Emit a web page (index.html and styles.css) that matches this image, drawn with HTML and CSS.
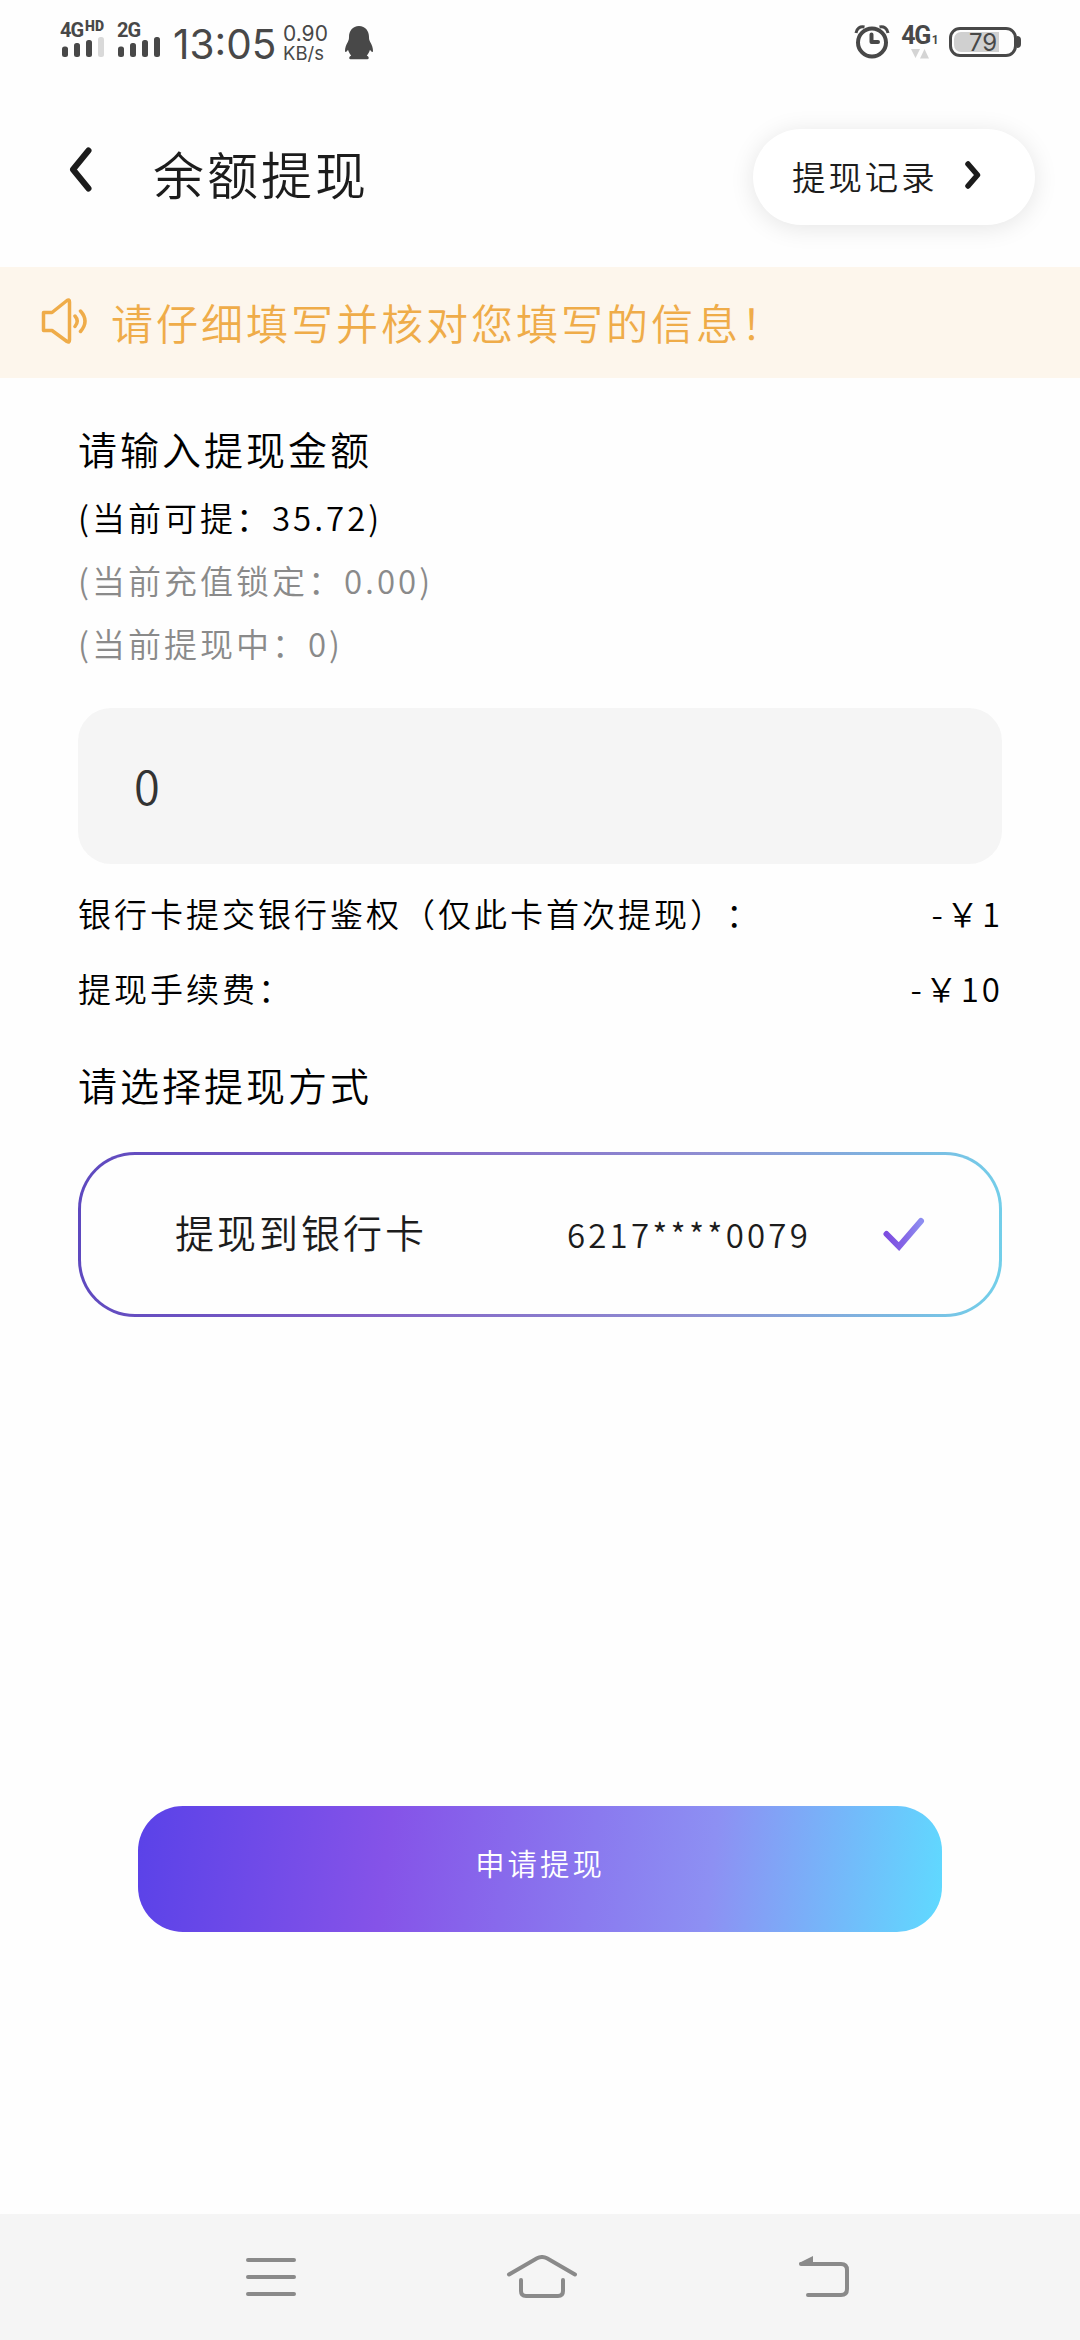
FILE: index.html
```html
<!DOCTYPE html>
<html lang="zh-CN">
<head>
<meta charset="utf-8">
<title>余额提现</title>
<link rel="stylesheet" href="styles.css">
</head>
<body>
<div class="screen">
  <div class="status">
    <div class="sim">
      <div class="net">4G<span class="hd">HD</span></div>
      <svg class="bars" width="43" height="20" viewBox="0 0 43 20" fill="#484848"><rect x="0" y="9.500" width="6" height="10.500" rx="2.500"/><rect x="12" y="6" width="6" height="14" rx="2.500"/><rect x="24" y="3" width="6" height="17" rx="2.500"/><rect x="36" y="0" width="6" height="20" rx="2.500" fill="#d9d9d9"/></svg>
    </div>
    <div class="sim sim2">
      <div class="net">2G</div>
      <svg class="bars" width="43" height="20" viewBox="0 0 43 20" fill="#484848"><rect x="0" y="9.500" width="6" height="10.500" rx="2.500"/><rect x="12" y="6" width="6" height="14" rx="2.500"/><rect x="24" y="3" width="6" height="17" rx="2.500"/><rect x="36" y="0" width="6" height="20" rx="2.500"/></svg>
    </div>
    <div class="clock">13:05</div>
    <div class="speed"><span>0.90</span><span class="unit">KB/s</span></div>
    <svg class="qq" width="28" height="34" viewBox="0 0 28 34" fill="#484848"><path d="M14 0C7.500 0 4 5 4 11c0 2-.4 3.500-1.200 5C1 19 0 22 0 25c0 2 1.500 1 3 -1.200C3.600 26 4.700 28 6.200 29.500 4 30.500 3.500 33.200 5.500 33.200h8.500 8.500c2 0 1.500-2.700-.7-3.700 1.500-1.500 2.600-3.500 3.200-5.700 1.500 2.200 3 3.200 3 1.200 0-3-1-6-2.800-9C24.400 14.500 24 13 24 11 24 5 20.500 0 14 0Z"/></svg>
    <svg class="alarm" width="36" height="36" viewBox="0 0 36 36" fill="none" stroke="#484848"><circle cx="18" cy="18.500" r="14" stroke-width="4"/><path d="M17.500 10.500V18h6.500" stroke-width="4" stroke-linecap="round" stroke-linejoin="round"/><path d="M2 9C2.500 4.500 6 2 10.500 3M34 9C33.500 4.500 30 2 25.500 3" stroke-width="3"/></svg>
    <div class="data">
      <div class="data-net">4G<span class="one">1</span></div>
      <svg width="18" height="10" viewBox="0 0 18 10" fill="#d4d4d4"><path d="M0 0h9L4.500 9zM9 9.500h9L13.500 0z"/></svg>
    </div>
    <div class="battery"><span class="level"></span><span class="pct">79</span></div>
    <span class="tip"></span>
  </div>

  <header class="header">
    <svg class="back" width="24" height="46" viewBox="0 0 24 46" fill="none" stroke="#1c1c1c" stroke-width="6" stroke-linecap="round" stroke-linejoin="round"><path d="M19.500 3.500 4 22.500l15.500 19"/></svg>
    <h1 class="title">余额提现</h1>
    <div class="record">
      <span>提现记录</span>
      <svg width="16" height="28" viewBox="0 0 16 28" fill="none" stroke="#1c1c1c" stroke-width="5.500" stroke-linecap="round" stroke-linejoin="round"><path d="M3 3l9.500 11L3 25"/></svg>
    </div>
  </header>

  <div class="notice">
    <svg width="48" height="48" viewBox="0 0 48 48" fill="none" stroke="#efac49" stroke-width="3.500" stroke-linecap="round" stroke-linejoin="round"><path d="M3.500 15.500H12L27 3.500q2.500-1.500 2.500 1.500V43q0 3-2.500 1.500L12 33.500H3.500Z"/><path d="M35 19q4.500 5 0 10.500M40.500 14q9 10 0 20.500"/></svg>
    <span>请仔细填写并核对您填写的信息！</span>
  </div>

  <main class="form">
    <h2 class="heading">请输入提现金额</h2>
    <div class="line">(当前可提：35.72)</div>
    <div class="line muted">(当前充值锁定：0.00)</div>
    <div class="line muted">(当前提现中：0)</div>
    <div class="amount">0</div>
    <div class="fee"><span>银行卡提交银行鉴权（仅此卡首次提现）：</span><span class="cost">-￥1</span></div>
    <div class="fee"><span>提现手续费：</span><span class="cost">-￥10</span></div>
    <h2 class="heading second">请选择提现方式</h2>
    <div class="method">
      <span class="method-name">提现到银行卡</span>
      <span class="card-no">6217****0079</span>
      <svg class="check" width="42" height="36" viewBox="0 0 42 36"><defs><linearGradient id="tick" x1="0" y1="0" x2="1" y2="0"><stop offset="0" stop-color="#7d4de0"/><stop offset=".5" stop-color="#8465e6"/><stop offset="1" stop-color="#8d8df0"/></linearGradient></defs><path d="M3.500 17 16 29.500 38 4" fill="none" stroke="url(#tick)" stroke-width="6" stroke-linecap="round"/></svg>
    </div>
  </main>

  <div class="submit">申请提现</div>

  <nav class="nav">
    <svg width="50" height="38" viewBox="0 0 50 38" fill="none" stroke="#8a8a8a" stroke-width="4" stroke-linecap="round"><path d="M2 2h46M2 19h46M2 36h46"/></svg>
    <svg class="home" width="72" height="44" viewBox="0 0 72 44" fill="none" stroke="#8a8a8a" stroke-width="4" stroke-linecap="round"><path d="M3 19.500 31 3.300Q36 .7 41 3.300L69 19.500M15 25V36q0 5 5 5H52q5 0 5-5V25"/></svg>
    <svg width="52" height="42" viewBox="0 0 52 42" fill="none" stroke="#8a8a8a" stroke-width="4" stroke-linecap="round"><path d="M3 8H43q6 0 6 6V33q0 6-6 6H10"/><path d="M1 7 15 0V9H2z" fill="#8a8a8a" stroke="none"/></svg>
  </nav>
</div>
</body>
</html>
```
FILE: styles.css
```css
* { box-sizing: border-box; }
body { margin: 0; background: #fefefe; }
svg { display: block; flex: none; }
.screen {
  width: 1080px;
  height: 2340px;
  display: flex;
  flex-direction: column;
  background: #fefefe;
  color: #000;
  font-family: "Noto Sans CJK SC", sans-serif;
  font-weight: 350;
  letter-spacing: 3px;
  white-space: nowrap;
  text-spacing-trim: space-all;
}

/* status bar */
.status {
  height: 90px;
  flex: none;
  display: flex;
  align-items: flex-start;
  padding: 20px 63px 0 60px;
  color: #484848;
  font-family: Inter, Roboto, sans-serif;
  font-weight: 400;
  letter-spacing: 0;
}
.sim { width: 48px; display: flex; flex-direction: column; }
.sim2 { margin-left: 9px; }
.net { height: 17px; font: 700 20px/20px Roboto, sans-serif; letter-spacing: -1px; display: flex; }
.hd { font-size: 14px; line-height: 13px; font-weight: 900; margin-left: 2px; letter-spacing: 0; }
.bars { margin-left: 2px; }
.sim2 .bars { margin-left: 1px; }
.clock { width: 103px; margin-left: 8px; font-size: 40.500px; line-height: 49px; }
.speed { width: 48px; margin-left: 7px; display: flex; flex-direction: column; font-size: 21px; line-height: 27px; }
.speed .unit { font-size: 18.500px; line-height: 13px; }
.qq { margin: 6px 0 0 14px; }
.alarm { margin: 4px 0 0 auto; }
.data { width: 34px; margin: 5px 0 0 13px; display: flex; flex-direction: column; align-items: center; gap: 4px; }
.data-net { height: 20px; display: flex; font: 700 25px/22px Roboto, sans-serif; letter-spacing: -1.500px; }
.one { font-size: 12px; line-height: 30px; letter-spacing: 0; margin-left: 2px; }
.battery {
  width: 68px;
  height: 30px;
  margin: 7px 0 0 12px;
  padding: 2px;
  position: relative;
  border: 3px solid #484848;
  border-radius: 11px;
}
.level { display: block; width: 45px; height: 20px; background: #d0d0d0; border-radius: 7px 0 0 7px; }
.pct { position: absolute; left: 17px; top: 0; font-size: 24px; line-height: 25px; }
.tip { width: 4px; height: 12px; margin: 16px -4px 0 0; background: #484848; border-radius: 0 4px 4px 0; }

/* header */
.header { height: 177px; flex: none; display: flex; align-items: flex-start; padding: 39px 45px 0 69px; color: #1c1c1c; }
.back { margin-top: 18px; }
.title { margin: 7px 0 0 60px; font-size: 51px; line-height: 74px; font-weight: 350; }
.record {
  width: 282px;
  height: 96px;
  margin-left: auto;
  padding: 0 54px 0 39px;
  display: flex;
  align-items: center;
  justify-content: space-between;
  border-radius: 48px;
  background: #fff;
  box-shadow: 0 3px 24px rgba(0, 0, 0, .1);
  font-size: 33.400px;
}
.record span { margin-top: -4px; }
.record svg { margin-top: -5px; }

.notice {
  height: 111px;
  flex: none;
  display: flex;
  align-items: center;
  gap: 23px;
  padding: 0 0 3px 40px;
  background: #fdf6ec;
  color: #efac49;
  font-size: 42px;
}

/* form */
.form { padding: 39px 78px 0; display: flex; flex-direction: column; }
.heading { margin: 0; height: 69px; font-size: 39px; line-height: 62px; font-weight: 350; }
.line { height: 63px; font-size: 33px; line-height: 63px; }
.muted { color: #8a8a8a; }
.amount {
  height: 156px;
  margin: 33px 0 12px;
  padding-left: 56px;
  border-radius: 33px;
  background: #f5f5f5;
  color: #333;
  font-size: 47px;
  line-height: 153px;
}
.fee { height: 75px; display: flex; justify-content: space-between; font-size: 33px; line-height: 75px; }
.cost { margin-right: -1px; }
.second { height: 65px; margin: 27px 0 34px; }
.method {
  height: 165px;
  display: flex;
  align-items: center;
  padding: 0 74px 0 94px;
  border: 3px solid transparent;
  border-radius: 57px;
  background:
    linear-gradient(#fefefe, #fefefe) padding-box,
    linear-gradient(95deg, #5d48bf, #8261c6 32%, #8f8ed2 67%, #72d0ea) border-box;
  color: #1c1c1c;
}
.method-name { margin-top: -7px; font-size: 39px; }
.card-no { margin: -2px 0 0 auto; font-size: 33px; letter-spacing: 3.200px; }
.check { margin-left: 72px; }

.submit {
  width: 804px;
  height: 126px;
  margin: auto auto 282px;
  flex: none;
  border-radius: 45px;
  background: linear-gradient(97deg, #5a42e8, #8553e8 31%, #8d90f3 71%, #5fdaff);
  color: #fff;
  font-size: 29.400px;
  line-height: 113px;
  text-align: center;
}

.nav {
  height: 126px;
  flex: none;
  display: flex;
  align-items: center;
  justify-content: space-between;
  padding: 0 230px 0 246px;
  background: #f5f5f5;
}
.home { margin: 0 10px 0 -1px; }
```
